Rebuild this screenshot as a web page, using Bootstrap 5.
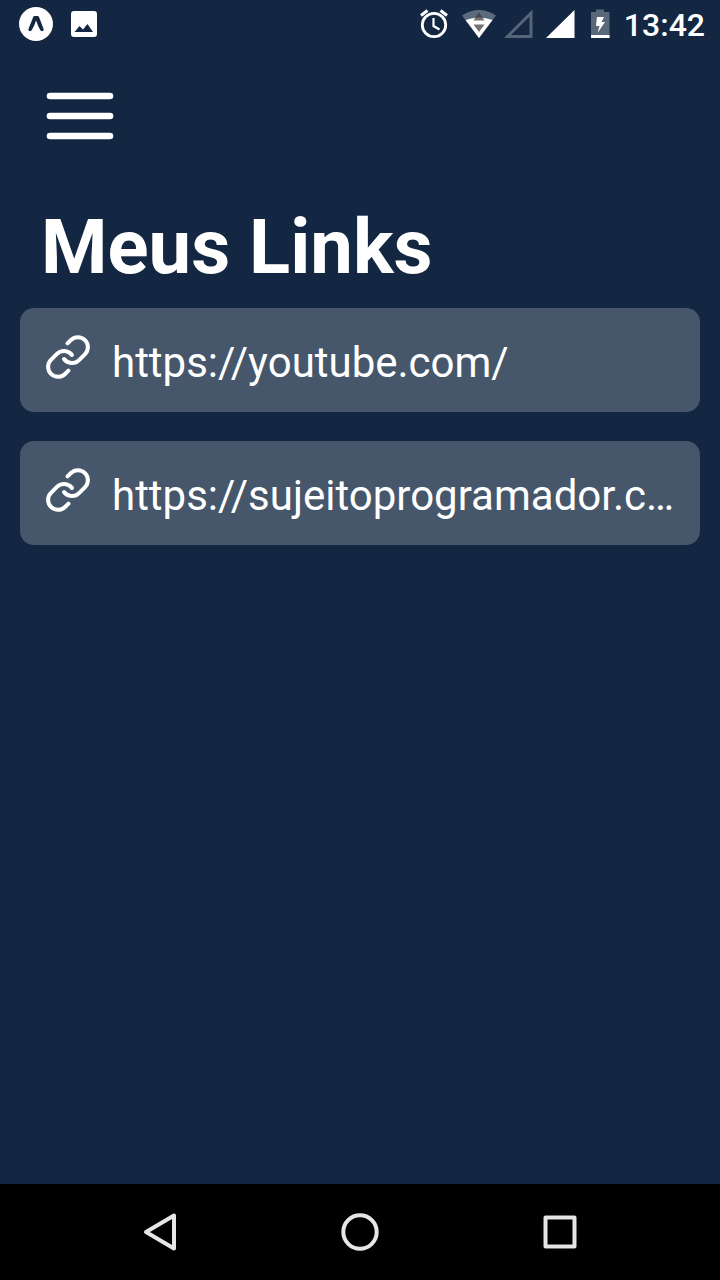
<!DOCTYPE html>
<html lang="pt-BR">
<head>
<meta charset="utf-8">
<meta name="viewport" content="width=device-width, initial-scale=1">
<title>Meus Links</title>
<link href="https://cdn.jsdelivr.net/npm/bootstrap@5.3.0/dist/css/bootstrap.min.css" rel="stylesheet">
<style>
  body { background: #132742; color: #fff; font-family: Roboto, "Liberation Sans", sans-serif; }
  .status-bar { height: 48px; padding: 0 15px 0 18px; }
  .status-time { font-size: 32px; line-height: 48px; font-weight: 500; padding-top: 2px; }
  .menu-btn { margin: 28px 40px 0; }
  .page-title { font-size: 76px; line-height: 88px; font-weight: 700; margin: 47px 41px 17px; }
  .links { gap: 29px; padding: 0 20px; }
  .link-item { gap: 20px; height: 104px; padding: 0 24px; border-radius: 14px; background: #46566b; color: #fff; }
  .link-item svg { margin-bottom: 6px; }
  .link-text { font-size: 42px; line-height: 56px; padding-top: 6px; }
  .system-nav { height: 96px; padding: 0 8.333%; background: #000; }
</style>
</head>
<body class="d-flex flex-column min-vh-100">

<header class="status-bar d-flex align-items-center justify-content-between">
  <div class="d-flex align-items-center">
    <svg width="36" height="48" viewBox="0 0 36 48" aria-hidden="true">
      <circle cx="18" cy="24" r="17" fill="#fff"/>
      <path d="M10.300 29.500L15.200 17Q15.600 16 16.600 16H19.600Q20.600 16 21 17L25.800 29.500Q25 32.500 22.500 30.500Q20.300 27 18.100 20.500Q16 27 13.500 30.500Q11.200 32.500 10.300 29.500Z" fill="#132742"/>
    </svg>
    <svg width="60" height="48" viewBox="0 0 60 48" aria-hidden="true">
      <rect x="17" y="11" width="26" height="26" rx="3" fill="#fff"/>
      <path d="M20.500 32L25.500 26L29 29.500L33.500 24L39 32Z" fill="#132742"/>
    </svg>
  </div>
  <div class="d-flex align-items-center">
    <svg width="205" height="48" viewBox="0 0 205 48" aria-hidden="true">
      <g fill="none" stroke="#fff">
        <circle cx="15" cy="25" r="11.700" stroke-width="2.800"/>
        <path d="M14.500 18V26L20.500 29.500" stroke-width="2.200"/>
        <path d="M2 15.500L8.500 10.500M21.500 10.500L28 15.500" stroke-width="3"/>
      </g>
      <path d="M43 15.500Q60 4.500 77 15.500L60 38Z" fill="#5c6a7d"/>
      <path d="M46.500 20Q60 15.500 73.500 20L60 38Z" fill="#fff"/>
      <path d="M60 12.500L65.500 20.500H54.500ZM54.500 24.500H65.500L60 32Z" fill="#737373"/>
      <path d="M60 12.500L63.500 17.500H56.500Z" fill="#444"/>
      <path d="M88.500 36.500L112 13V36.500Z" fill="none" stroke="#566579" stroke-width="3"/>
      <path d="M127 38L155.500 10V38Z" fill="#fff"/>
      <path d="M172 12H177V9.500H185V12H190.500V38H172Z" fill="#596879"/>
      <path d="M172 35H190.500V38H172ZM178 17H185L182.500 22H186L178.500 33L180.500 26H177Z" fill="#fff"/>
    </svg>
    <time class="status-time" datetime="13:42">13:42</time>
  </div>
</header>

<main class="flex-grow-1">
  <button type="button" class="menu-btn btn p-0 border-0 text-white d-block" aria-label="Abrir menu">
    <svg class="d-block" width="80" height="80" viewBox="0 0 24 24" fill="none" stroke="currentColor" stroke-width="2" stroke-linecap="round"><path d="M3 6h18M3 12h18M3 18h18"/></svg>
  </button>

  <h1 class="page-title">Meus Links</h1>

  <ul class="links list-unstyled d-flex flex-column mb-0">
    <li>
      <a class="link-item d-flex align-items-center text-decoration-none" href="https://youtube.com/">
        <svg class="flex-shrink-0" width="48" height="48" viewBox="0 0 24 24" fill="none" stroke="currentColor" stroke-width="2" stroke-linecap="round" stroke-linejoin="round" aria-hidden="true"><path d="M10 13a5 5 0 0 0 7.540.540l3-3a5 5 0 0 0-7.070-7.070l-1.720 1.710"/><path d="M14 11a5 5 0 0 0-7.540-.540l-3 3a5 5 0 0 0 7.070 7.070l1.710-1.710"/></svg>
        <span class="link-text text-truncate">https://youtube.com/</span>
      </a>
    </li>
    <li>
      <a class="link-item d-flex align-items-center text-decoration-none" href="https://sujeitoprogramador.com/">
        <svg class="flex-shrink-0" width="48" height="48" viewBox="0 0 24 24" fill="none" stroke="currentColor" stroke-width="2" stroke-linecap="round" stroke-linejoin="round" aria-hidden="true"><path d="M10 13a5 5 0 0 0 7.540.540l3-3a5 5 0 0 0-7.070-7.070l-1.720 1.710"/><path d="M14 11a5 5 0 0 0-7.540-.540l-3 3a5 5 0 0 0 7.070 7.070l1.710-1.710"/></svg>
        <span class="link-text text-truncate">https://sujeitoprogramador.c…</span>
      </a>
    </li>
  </ul>
</main>

<nav class="system-nav d-flex align-items-stretch" aria-label="Sistema">
  <button type="button" class="btn flex-fill w-100 p-0 border-0" aria-label="Voltar">
    <svg width="48" height="48" viewBox="0 0 48 48" fill="none" stroke="#e6e6e6" stroke-width="4" stroke-linejoin="round"><path d="M38 7.500V40.500L10 24Z"/></svg>
  </button>
  <button type="button" class="btn flex-fill w-100 p-0 border-0" aria-label="Início">
    <svg width="48" height="48" viewBox="0 0 48 48" fill="none" stroke="#e6e6e6" stroke-width="4"><circle cx="24" cy="24" r="16.700"/></svg>
  </button>
  <button type="button" class="btn flex-fill w-100 p-0 border-0" aria-label="Recentes">
    <svg width="48" height="48" viewBox="0 0 48 48" fill="none" stroke="#e6e6e6" stroke-width="4" stroke-linejoin="round"><rect x="9.500" y="9.500" width="29" height="29"/></svg>
  </button>
</nav>

<script src="https://cdn.jsdelivr.net/npm/bootstrap@5.3.0/dist/js/bootstrap.bundle.min.js"></script>
</body>
</html>
